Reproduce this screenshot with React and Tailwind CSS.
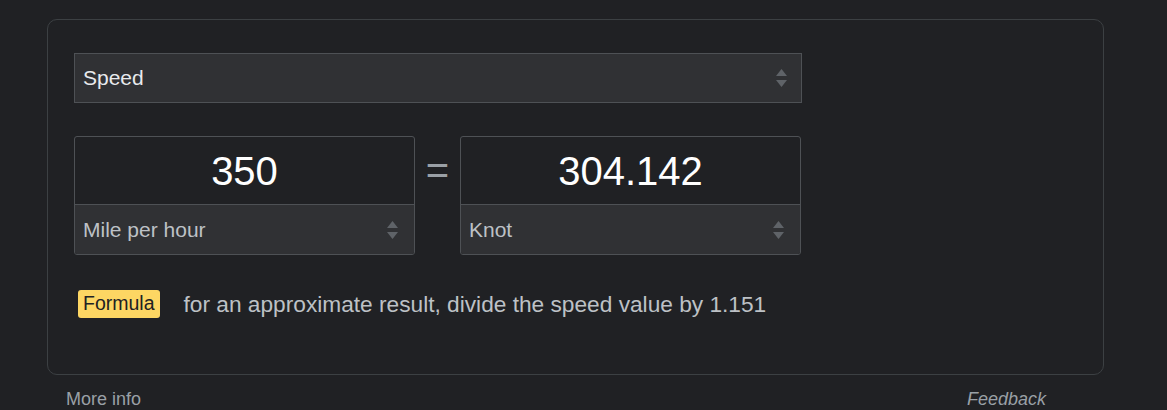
import React from 'react';

const Updown = ({ className = '' }) => (
  <svg width="11" height="18" viewBox="0 0 11 18" className={className} aria-hidden="true">
    <path d="M5.5 0 L11 7 L0 7 Z" fill="#5f6368" />
    <path d="M0 11 L11 11 L5.5 18 Z" fill="#5f6368" />
  </svg>
);

const UnitBox = ({ value, unit }) => (
  <div className="w-[341px] h-[119px] border border-[#4e5155] rounded-[3px] flex flex-col overflow-hidden">
    <div className="h-[68px] flex items-center justify-center text-[40px] text-white leading-none">
      {value}
    </div>
    <div className="h-[50px] border-t border-[#4e5155] bg-[#303134] flex items-center justify-between pl-[8px] pr-[16px]">
      <span className="text-[21px] text-[#bdc1c6]">{unit}</span>
      <Updown />
    </div>
  </div>
);

export default function App() {
  return (
    <div className="w-[1167px] h-[410px] overflow-hidden bg-[#202124] pt-[19px] pl-[47px] font-['Liberation_Sans',Arial,sans-serif]">
      <div className="w-[1057px] h-[356px] border border-[#3c4043] rounded-[10px] pt-[33px] pl-[26px]">
        <div className="w-[728px]">
          <div className="h-[50px] border border-[#4e5155] bg-[#303134] flex items-center justify-between pl-[8px] pr-[14px]">
            <span className="text-[21px] text-[#e8eaed]">Speed</span>
            <Updown />
          </div>

          <div className="mt-[33px] flex items-start">
            <UnitBox value="350" unit="Mile per hour" />
            <div className="w-[45px] h-[68px] flex items-center justify-center text-[40px] text-[#9aa0a6] leading-none">=</div>
            <UnitBox value="304.142" unit="Knot" />
          </div>
        </div>

        <div className="mt-[32px] flex items-center pl-[4px]">
          <span className="h-[28px] px-[5px] flex items-center rounded-[3px] bg-[#fdd663] text-[#202124] text-[19.5px]">Formula</span>
          <span className="ml-[24px] text-[22.7px] text-[#bdc1c6]">for an approximate result, divide the speed value by 1.151</span>
        </div>
      </div>

      <div className="w-[1057px] mt-[11px] flex justify-between pl-[19px] pr-[58px] text-[18px] text-[#9aa0a6]">
        <span>More info</span>
        <span className="italic">Feedback</span>
      </div>
    </div>
  );
}
